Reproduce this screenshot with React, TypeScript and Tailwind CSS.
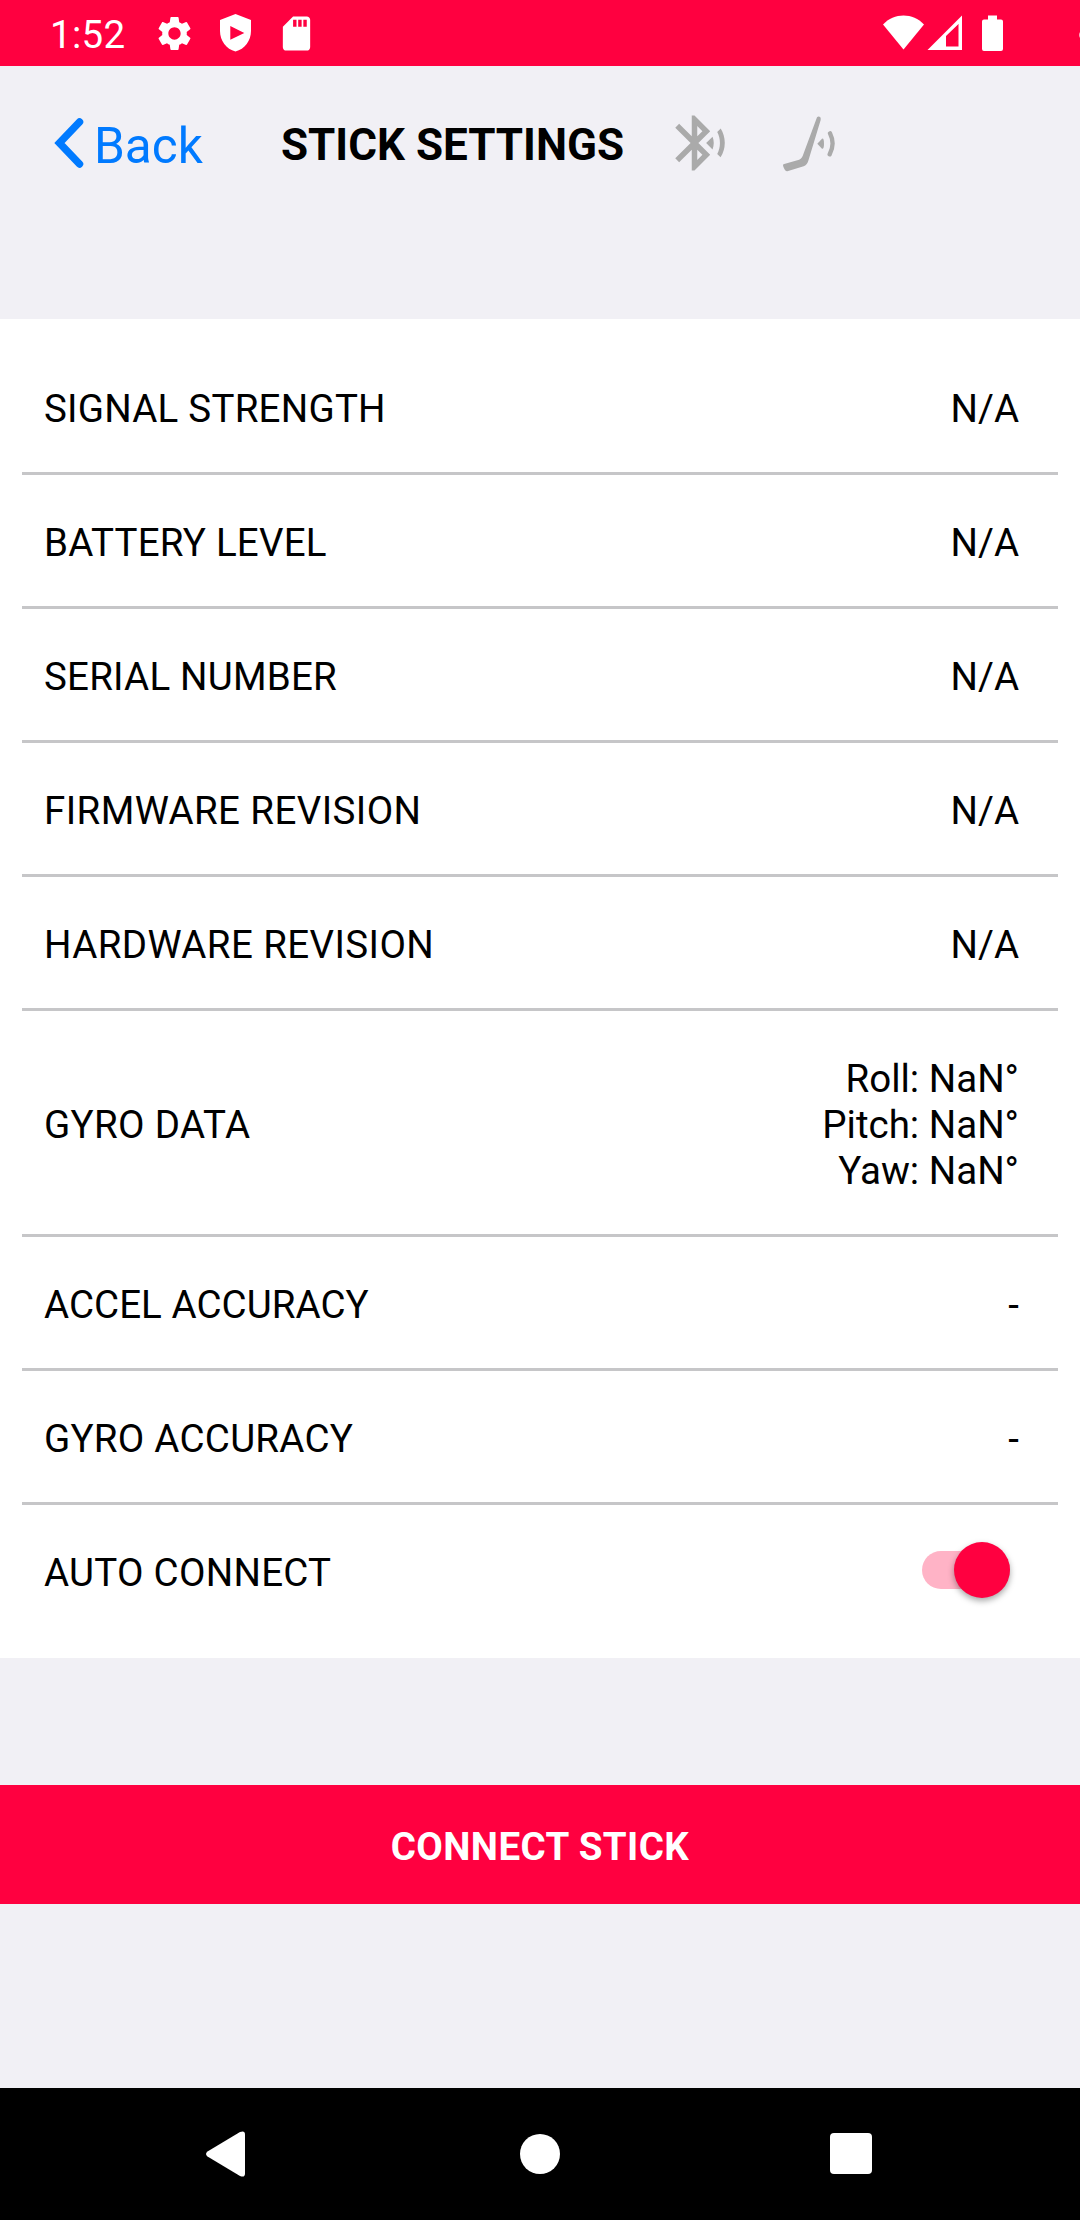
import React, { useState } from 'react';
import { MdBluetoothAudio, MdSdCard, MdSettings } from 'react-icons/md';

interface InfoRow {
  label: string;
  values: string[];
  tracking: string;
}

const rows: InfoRow[] = [
  { label: 'SIGNAL STRENGTH', values: ['N/A'], tracking: 'tracking-[0.23px]' },
  { label: 'BATTERY LEVEL', values: ['N/A'], tracking: 'tracking-[0.2px]' },
  { label: 'SERIAL NUMBER', values: ['N/A'], tracking: 'tracking-[0.2px]' },
  { label: 'FIRMWARE REVISION', values: ['N/A'], tracking: 'tracking-[0.4px]' },
  { label: 'HARDWARE REVISION', values: ['N/A'], tracking: 'tracking-[0.4px]' },
  {
    label: 'GYRO DATA',
    values: ['Roll: NaN°', 'Pitch: NaN°', 'Yaw: NaN°'],
    tracking: 'tracking-[0.35px]',
  },
  { label: 'ACCEL ACCURACY', values: ['-'], tracking: 'tracking-[0.05px]' },
  { label: 'GYRO ACCURACY', values: ['-'], tracking: 'tracking-[0.25px]' },
];

const StatusBar: React.FC = () => (
  <div className="flex h-[66px] items-center overflow-hidden bg-[#ff0040] text-white">
    <span className="ml-[50px] w-[104px] pt-[4px] text-[38.5px] leading-none tracking-[0.3px]">
      1:52
    </span>
    <MdSettings className="h-[41px] w-[41px]" />
    <svg className="ml-[25px] h-[38px] w-[31px]" viewBox="0 0 31 38" fill="currentColor">
      <path
        fillRule="evenodd"
        d="M15.5 0 31 6v11c0 9.500-6.200 18.200-15.500 20.500C6.200 35.200 0 26.500 0 17V6zM10.300 12v13.800L24.300 19z"
      />
    </svg>
    <MdSdCard className="ml-[25px] h-[41px] w-[41px]" />
    <svg className="ml-auto h-[37px] w-[122px]" viewBox="0 0 122 37" fill="currentColor">
      <path d="M0 9.500C11-2.500 30-2.500 41 9.500L20.500 34.500z" />
      <path fillRule="evenodd" d="M44.500 35 79 0.500V35zM63 21v10.500h12.500V9z" />
      <path d="M105 0.500h9v4h4q2 0 2 2v27.500q0 2-2 2h-17q-2 0-2-2V6.500q0-2 2-2h4z" />
    </svg>
    {/* next status dot, clipped by the screen edge */}
    <div className="mt-[4px] -mr-[9px] ml-[74px] h-[10px] w-[10px] rounded-full bg-white/70" />
  </div>
);

const HockeyStickIcon: React.FC = () => (
  <svg className="h-[56px] w-[53px]" viewBox="0 0 159 168" fill="currentColor">
    <path d="M102 4Q107-1 113 5v7L76 134q-4 13-14 17l-49 15Q6 167 0 149l1-4 42-12q12-3 16-13z" />
    <path d="M103 83 117 68q6-2 6 15t-6 15z" />
    <path
      d="M141 52q16 32-1 63"
      fill="none"
      stroke="currentColor"
      strokeWidth="13"
      strokeLinecap="round"
    />
  </svg>
);

const Header: React.FC = () => (
  <header className="flex h-[253px] items-start">
    <button type="button" className="ml-[54px] flex pt-[47px] text-[#007aff]">
      <svg className="mt-[5px] h-[50px] w-[30px]" viewBox="0 0 30 50" fill="none">
        <path
          d="M25.500 4 5.500 25l20 21"
          stroke="currentColor"
          strokeWidth="7.500"
          strokeLinecap="round"
        />
      </svg>
      <span className="ml-[10px] w-[187px] text-left text-[49.5px] leading-[66px]">Back</span>
    </button>
    <h1 className="w-[386px] pt-[49px] text-[44px] leading-[60px] font-bold whitespace-nowrap">
      STICK SETTINGS
    </h1>
    <MdBluetoothAudio className="mt-[44px] h-[66px] w-[66px] text-[#aaaaaa]" />
    <div className="mt-[50px] ml-[50px] text-[#aaaaaa]">
      <HockeyStickIcon />
    </div>
  </header>
);

interface ToggleProps {
  checked: boolean;
  onChange: (checked: boolean) => void;
}

const Toggle: React.FC<ToggleProps> = ({ checked, onChange }) => (
  <button
    type="button"
    role="switch"
    aria-checked={checked}
    aria-label="Auto connect"
    onClick={() => onChange(!checked)}
    className={`mr-[26px] flex h-[38px] w-[88px] items-center rounded-full ${
      checked ? 'justify-end bg-[#ffb3c6]' : 'justify-start bg-gray-300'
    }`}
  >
    <span
      className={`h-[56px] w-[56px] shrink-0 rounded-full shadow-[0_3px_6px_rgba(0,0,0,0.35)] ${
        checked ? 'bg-[#ff0040]' : 'bg-gray-50'
      }`}
    />
  </button>
);

const NavigationBar: React.FC = () => (
  <nav className="flex h-[132px] items-center bg-black pb-[1px] text-white">
    <svg className="ml-[206px] h-[46px] w-[39px]" viewBox="0 0 39 46" fill="currentColor">
      <path d="M1.500 20.500 34 1q5-2 5 2.500v39q0 4.500-5 2.500L1.500 25.500q-3-2.500 0-5z" />
    </svg>
    <div className="ml-[275px] h-[40px] w-[40px] rounded-full bg-white" />
    <div className="ml-[270px] h-[41px] w-[42px] rounded-[4px] bg-white" />
  </nav>
);

const App: React.FC = () => {
  const [autoConnect, setAutoConnect] = useState(true);

  return (
    <div className="flex h-[2220px] w-[1080px] flex-col bg-[#f1f0f5] font-[Roboto,sans-serif] text-black">
      <StatusBar />
      <Header />

      <main className="bg-white px-[22px] py-[22px] text-[38.5px] leading-[46px]">
        {rows.map((row) => (
          <div
            key={row.label}
            className="flex items-center justify-between border-b-[3px] border-[#c6c6c8] pt-[45px] pr-[39px] pb-[40px] pl-[22px]"
          >
            <span className={row.tracking}>{row.label}</span>
            <div className="text-right">
              {row.values.map((value) => (
                <div key={value}>{value}</div>
              ))}
            </div>
          </div>
        ))}
        <div className="mb-[1px] flex h-[130px] items-center justify-between px-[22px]">
          <span className="pt-[6px] tracking-[0.27px]">AUTO CONNECT</span>
          <Toggle checked={autoConnect} onChange={setAutoConnect} />
        </div>
      </main>

      <button
        type="button"
        className="mt-[127px] h-[119px] bg-[#ff0040] pt-[5px] text-[38.5px] font-bold tracking-[0.4px] text-white"
      >
        CONNECT STICK
      </button>

      <div className="flex-1" />
      <NavigationBar />
    </div>
  );
};

export default App;
